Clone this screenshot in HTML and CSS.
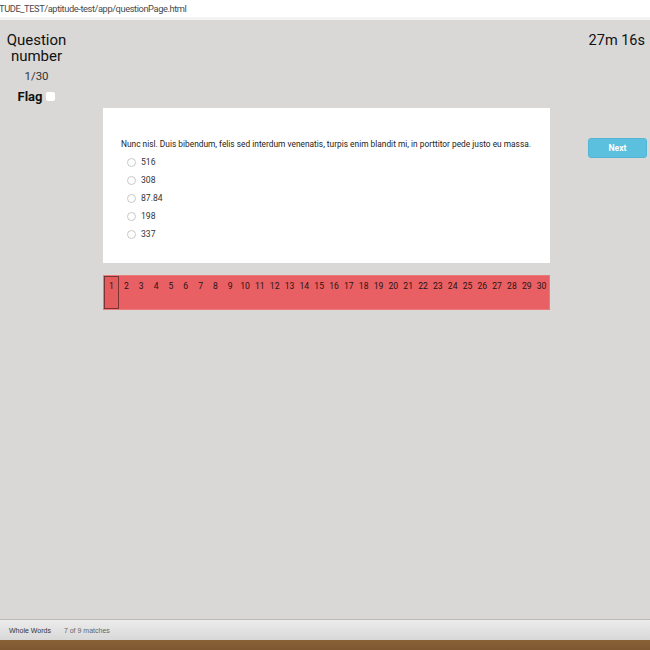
FILE: index.html
```html
<!DOCTYPE html>
<html>
<head>
<meta charset="utf-8">
<link rel="stylesheet" href="styles.css">
</head>
<body>
<div class="urlbar"><span class="url">TUDE_TEST/aptitude-test/app/questionPage.html</span></div>
<div class="page">
  <aside class="sidebar">
    <div class="qtitle">Question number</div>
    <div class="qcount">1/30</div>
    <label class="flag">Flag <span class="checkbox"></span></label>
  </aside>
  <main class="main">
    <section class="card">
      <p class="question">Nunc nisl. Duis bibendum, felis sed interdum venenatis, turpis enim blandit mi, in porttitor pede justo eu massa.</p>
      <ul class="options">
        <li><span class="radio"></span>516</li>
        <li><span class="radio"></span>308</li>
        <li><span class="radio"></span>87.84</li>
        <li><span class="radio"></span>198</li>
        <li><span class="radio"></span>337</li>
      </ul>
    </section>
    <nav class="pager">
      <span class="pg active">1</span><span class="pg">2</span><span class="pg">3</span><span class="pg">4</span><span class="pg">5</span><span class="pg">6</span><span class="pg">7</span><span class="pg">8</span><span class="pg">9</span><span class="pg">10</span><span class="pg">11</span><span class="pg">12</span><span class="pg">13</span><span class="pg">14</span><span class="pg">15</span><span class="pg">16</span><span class="pg">17</span><span class="pg">18</span><span class="pg">19</span><span class="pg">20</span><span class="pg">21</span><span class="pg">22</span><span class="pg">23</span><span class="pg">24</span><span class="pg">25</span><span class="pg">26</span><span class="pg">27</span><span class="pg">28</span><span class="pg">29</span><span class="pg">30</span>
    </nav>
  </main>
  <aside class="right">
    <div class="timer">27m 16s</div>
    <button class="next">Next</button>
  </aside>
</div>
<div class="findbar"><span class="fb-opt">Whole Words</span><span class="fb-count">7 of 9 matches</span></div>
<div class="desk"></div>
</body>
</html>
```
FILE: styles.css
```css
* { box-sizing: border-box; }
html, body { margin: 0; padding: 0; }
body {
  width: 650px;
  height: 650px;
  display: flex;
  flex-direction: column;
  font-family: Roboto, "Liberation Sans", sans-serif;
  background: #d9d8d6;
  overflow: hidden;
}
.urlbar {
  height: 20px;
  background: #fff;
  border-bottom: 3px solid #f3f3f3;
  box-shadow: inset 0 -3px 0 #fff;
  display: flex;
  align-items: flex-start;
  flex: none;
}
.url {
  font-family: Roboto, "Liberation Sans", sans-serif;
  font-size: 9.3px;
  letter-spacing: -0.42px;
  line-height: 17px;
  color: #4a4a4a;
  margin-left: -1px;
}
.page {
  flex: 1;
  display: grid;
  grid-template-columns: 73px 477px 100px;
  background: #d9d8d6;
}
.sidebar {
  text-align: center;
  padding-top: 13px;
  color: #111;
}
.qtitle {
  font-size: 15px;
  line-height: 15.5px;
}
.qcount {
  font-size: 11.5px;
  color: #333;
  margin-top: 4.5px;
  line-height: 14px;
}
.flag {
  display: inline-flex;
  align-items: center;
  gap: 4px;
  font-weight: bold;
  font-size: 13px;
  margin-top: 6px;
  line-height: 16px;
}
.checkbox {
  width: 9px;
  height: 9px;
  background: #fff;
  border-radius: 2px;
  display: inline-block;
}
.main {
  padding-left: 30px;
  padding-top: 88px;
}
.card {
  width: 447px;
  height: 155px;
  background: #fff;
  padding: 31px 0 0 18px;
}
.question {
  margin: 0;
  font-size: 8.35px;
  line-height: 11px;
  color: #222;
  white-space: nowrap;
}
.options {
  list-style: none;
  margin: 3px 0 0 0;
  padding: 0 0 0 6px;
}
.options li {
  display: flex;
  align-items: center;
  height: 18px;
  font-size: 8.6px;
  color: #333;
}
.radio {
  width: 9px;
  height: 9px;
  border: 1px solid #c8c8c8;
  border-radius: 50%;
  margin-right: 5px;
  background: #fff;
}
.pager {
  margin-top: 12px;
  width: 447px;
  height: 35px;
  display: flex;
  background: #e86063;
  border: 1px solid #ea7b7b;
}
.pg {
  flex: 1;
  text-align: center;
  font-size: 8.6px;
  color: #2a1414;
  padding-top: 5px;
  line-height: 11px;
}
.pg.active {
  flex: 0 0 15px;
  border: 1px solid #7a3434;
  padding-top: 4px;
  background: #e55c5f;
}
.right {
  display: flex;
  flex-direction: column;
  align-items: flex-end;
  padding-top: 12px;
  padding-right: 5px;
}
.timer {
  font-size: 14.5px;
  line-height: 18px;
  color: #111;
}
.next {
  margin-top: 88px;
  margin-right: -2px;
  width: 59px;
  height: 20px;
  background: #5bc0de;
  border: 1px solid #55b6d4;
  border-radius: 3px;
  color: #fff;
  font-family: Roboto, "Liberation Sans", sans-serif;
  font-weight: bold;
  font-size: 8.6px;
  padding: 0;
}
.findbar {
  flex: none;
  height: 21px;
  border-top: 1px solid #b8b8b8;
  background: linear-gradient(#ececec, #d8d8d8);
  display: flex;
  align-items: center;
  padding-left: 9px;
  gap: 13px;
  font-family: "Liberation Sans", sans-serif;
  font-size: 7px;
}
.fb-opt { color: #333; }
.fb-count { color: #666; }
.desk {
  flex: none;
  height: 10px;
  background: linear-gradient(#8a6238, #7e5630);
}
```
